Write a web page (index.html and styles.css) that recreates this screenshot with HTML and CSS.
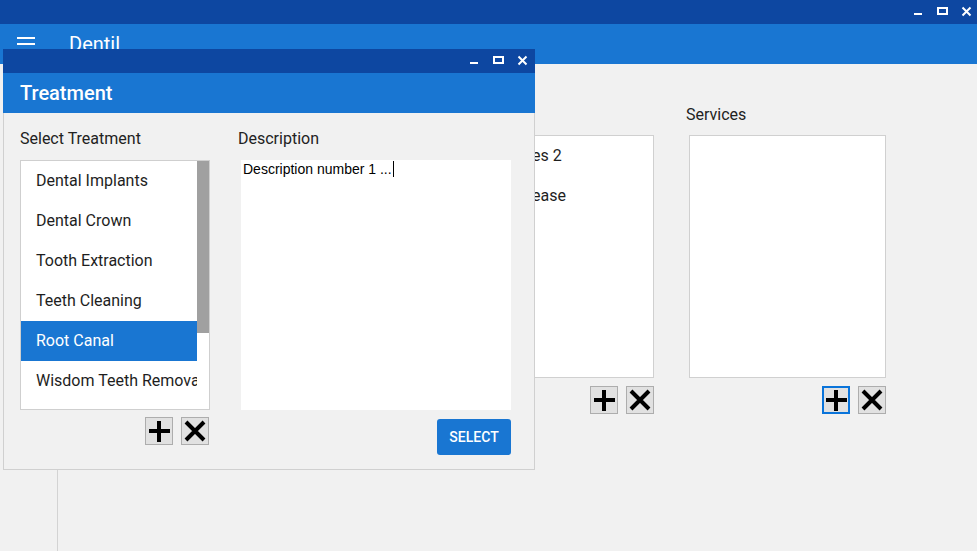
FILE: index.html
```html
<!DOCTYPE html>
<html>
<head>
<meta charset="utf-8">
<title>Dentil</title>
<link rel="stylesheet" href="styles.css">
</head>
<body>
<div class="app">
  <div class="topbar">
    <div class="ctl"><svg width="24" height="24"><rect x="9" y="13" width="8" height="2" fill="#fff"/></svg></div>
    <div class="ctl"><svg width="24" height="24"><rect x="9" y="8" width="9" height="6" fill="none" stroke="#fff" stroke-width="2"/></svg></div>
    <div class="ctl"><svg width="24" height="24"><path d="M9.5 7.5 L17.5 15.5 M17.5 7.5 L9.5 15.5" stroke="#fff" stroke-width="2"/></svg></div>
  </div>
  <div class="appbar">
    <div class="hamburger"><span></span><span></span><span></span></div>
    <div class="apptitle">Dentil</div>
  </div>
  <div class="main">
    <aside class="sidebar"></aside>
    <section class="content">
      <div class="col col-diseases">
        <div class="label">Diseases</div>
        <div class="listbox">
          <div class="item">Diseases 2</div>
          <div class="item">Lip Disease</div>
        </div>
        <div class="btnrow">
          <div class="ibtn"><svg width="26" height="26"><path d="M3 13 H24 M13 3 V24" stroke="#000" stroke-width="4"/></svg></div>
          <div class="ibtn"><svg width="26" height="26"><path d="M4 4 L22 22 M22 4 L4 22" stroke="#000" stroke-width="4"/></svg></div>
        </div>
      </div>
      <div class="col col-services">
        <div class="label">Services</div>
        <div class="listbox"></div>
        <div class="btnrow">
          <div class="ibtn focused"><svg width="24" height="24"><path d="M2 12 H23 M12 2 V23" stroke="#000" stroke-width="4"/></svg></div>
          <div class="ibtn"><svg width="26" height="26"><path d="M4 4 L22 22 M22 4 L4 22" stroke="#000" stroke-width="4"/></svg></div>
        </div>
      </div>
    </section>
  </div>

  <div class="dialog">
    <div class="dtitlebar">
      <div class="ctl"><svg width="24" height="24"><rect x="9" y="13" width="8" height="2" fill="#fff"/></svg></div>
      <div class="ctl"><svg width="24" height="24"><rect x="9" y="8" width="9" height="6" fill="none" stroke="#fff" stroke-width="2"/></svg></div>
      <div class="ctl"><svg width="24" height="24"><path d="M9.5 7.5 L17.5 15.5 M17.5 7.5 L9.5 15.5" stroke="#fff" stroke-width="2"/></svg></div>
    </div>
    <div class="dheader">Treatment</div>
    <div class="dbody">
      <div class="dcol dcol-list">
        <div class="label">Select Treatment</div>
        <div class="tlist">
          <div class="titems">
            <div class="item">Dental Implants</div>
            <div class="item">Dental Crown</div>
            <div class="item">Tooth Extraction</div>
            <div class="item">Teeth Cleaning</div>
            <div class="item selected">Root Canal</div>
            <div class="item">Wisdom Teeth Removal</div>
          </div>
          <div class="scrollbar"><div class="thumb"></div></div>
        </div>
        <div class="btnrow dbtnrow">
          <div class="ibtn"><svg width="26" height="26"><path d="M3 13 H24 M13 3 V24" stroke="#000" stroke-width="4"/></svg></div>
          <div class="ibtn"><svg width="26" height="26"><path d="M4 4 L22 22 M22 4 L4 22" stroke="#000" stroke-width="4"/></svg></div>
        </div>
      </div>
      <div class="dcol dcol-desc">
        <div class="label">Description</div>
        <div class="textarea">Description number 1 ...<span class="caret"></span></div>
        <div class="selectbtn">SELECT</div>
      </div>
    </div>
  </div>
</div>
</body>
</html>
```

FILE: styles.css
```css
body {
  margin: 0;
  background: #f1f1f1;
  font-family: Roboto, "Noto Sans", sans-serif;
}

.app {
  position: relative;
  width: 977px;
  height: 551px;
  overflow: hidden;
  background: #f1f1f1;
}

.topbar {
  height: 24px;
  background: #0d47a1;
  display: flex;
  justify-content: flex-end;
}

.ctl {
  width: 24px;
  height: 24px;
}

.ctl svg {
  display: block;
}

.appbar {
  height: 40px;
  background: #1976d2;
  display: flex;
  align-items: center;
  padding-left: 17px;
  color: #fff;
}

.hamburger {
  width: 18px;
  display: flex;
  flex-direction: column;
  gap: 4.5px;
}

.hamburger span {
  display: block;
  height: 2px;
  background: #fff;
}

.apptitle {
  margin-left: 34px;
  font-size: 20px;
  line-height: 24px;
}

.main {
  display: flex;
  height: 487px;
}

.sidebar {
  width: 57px;
  border-right: 1px solid #d3d3d3;
}

.content {
  padding: 41px 0 0 407px;
  display: flex;
  gap: 32px;
  align-items: flex-start;
}

.label {
  font-size: 16px;
  line-height: 19px;
  color: #222;
}

.col-diseases {
  width: 189px;
}

.col-services {
  width: 200px;
}

.listbox {
  margin-top: 11px;
  margin-left: 3px;
  height: 243px;
  box-sizing: border-box;
  background: #fff;
  border: 1px solid #d0d0d0;
  overflow: hidden;
}

.item {
  height: 40px;
  line-height: 40px;
  padding-left: 15px;
  font-size: 16px;
  color: #1e1e1e;
  white-space: nowrap;
}

.item.selected {
  background: #1976d2;
  color: #fff;
}

.btnrow {
  display: flex;
  justify-content: flex-end;
  gap: 8px;
  margin-top: 8px;
}

.ibtn {
  width: 28px;
  height: 28px;
  box-sizing: border-box;
  border: 1px solid #adadad;
  background: #e1e1e1;
  display: flex;
  align-items: center;
  justify-content: center;
}

.ibtn svg {
  display: block;
}

.ibtn.focused {
  border: 2px solid #0a74da;
}

/* dialog window */
.dialog {
  position: absolute;
  left: 3px;
  top: 49px;
  width: 532px;
  height: 421px;
  box-sizing: border-box;
  border: 1px solid #d0d0d0;
  border-top: none;
  background: #f1f1f1;
}

.dtitlebar {
  margin: 0 -1px;
  height: 24px;
  background: #0d47a1;
  display: flex;
  justify-content: flex-end;
  padding-right: 2px;
}

.dheader {
  margin: 0 -1px;
  height: 40px;
  background: #1976d2;
  color: #fff;
  font-size: 20px;
  font-weight: 500;
  line-height: 40px;
  padding-left: 17px;
}

.dbody {
  display: flex;
  gap: 28px;
  padding: 16px 0 0 16px;
}

.dcol {
  display: flex;
  flex-direction: column;
}

.dcol-list {
  width: 190px;
}

.dcol-desc {
  width: 273px;
}

.tlist {
  margin-top: 12px;
  height: 250px;
  box-sizing: border-box;
  border: 1px solid #cfcfcf;
  background: #fff;
  display: flex;
}

.titems {
  flex: 1;
  overflow: hidden;
}

.scrollbar {
  width: 12px;
  background: #fff;
}

.thumb {
  height: 172px;
  background: #a0a0a0;
}

.dbtnrow {
  margin-top: 7px;
  margin-right: 1px;
}

.textarea {
  margin-top: 12px;
  margin-left: 3px;
  width: 270px;
  height: 250px;
  box-sizing: border-box;
  background: #fff;
  padding: 1px 2px;
  font-family: "Liberation Sans", Arial, sans-serif;
  font-size: 14px;
  line-height: 16px;
  color: #000;
}

.caret {
  display: inline-block;
  width: 1px;
  height: 16px;
  background: #000;
  vertical-align: top;
  margin-left: 1px;
}

.selectbtn {
  align-self: flex-end;
  margin-top: 9px;
  width: 74px;
  height: 36px;
  border-radius: 3px;
  background: #1976d2;
  color: #fff;
  font-size: 14px;
  font-weight: 500;
  line-height: 36px;
  text-align: center;
}
```
